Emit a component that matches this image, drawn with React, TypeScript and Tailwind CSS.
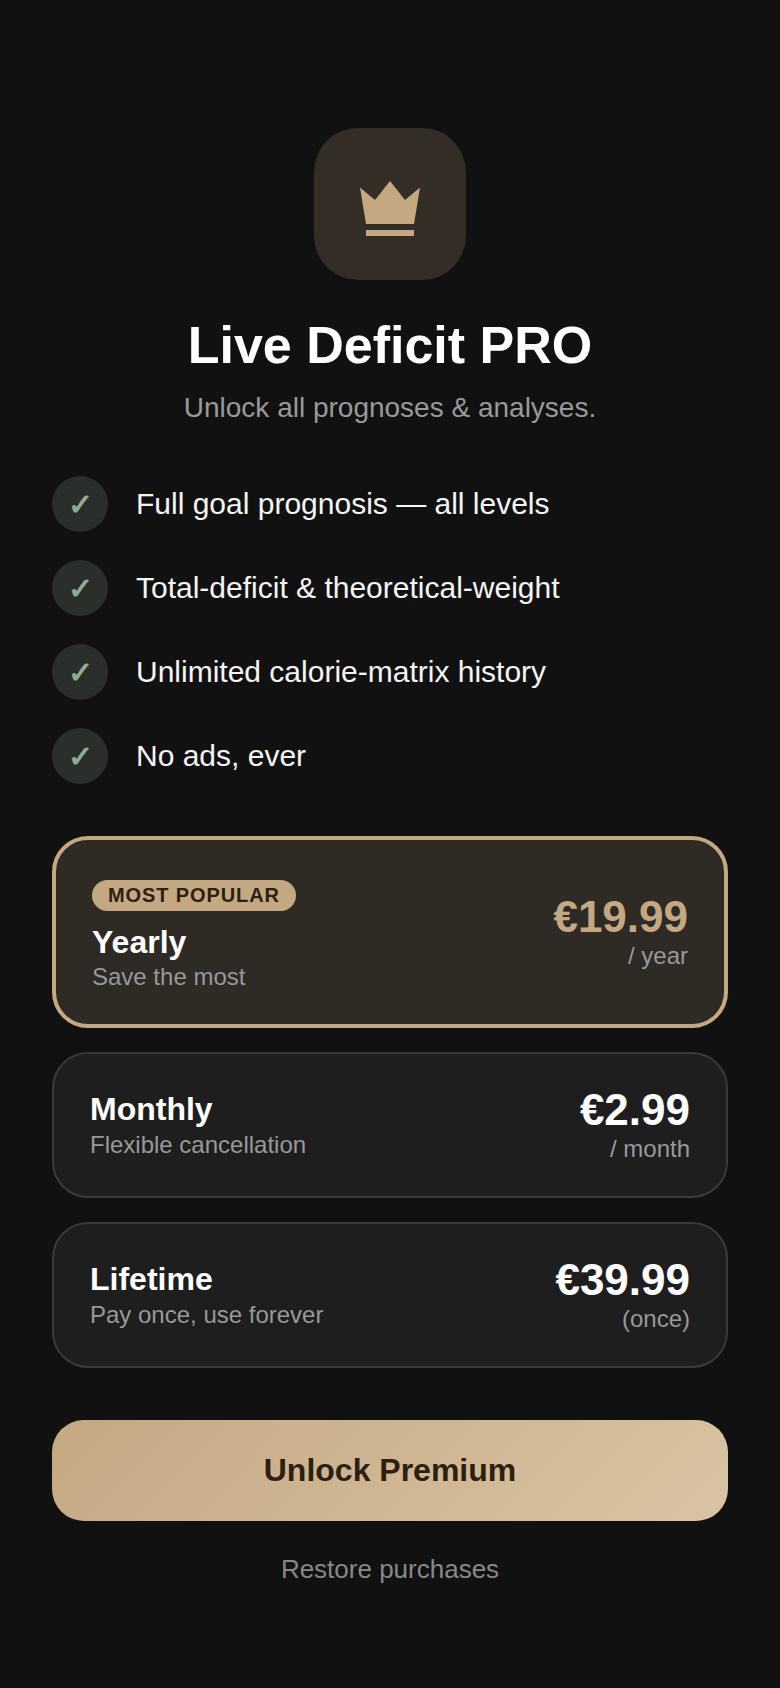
const features = [
  "Full goal prognosis — all levels",
  "Total-deficit & theoretical-weight",
  "Unlimited calorie-matrix history",
  "No ads, ever",
];

const plans = [
  { name: "Monthly", desc: "Flexible cancellation", price: "€2.99", unit: "/ month" },
  { name: "Lifetime", desc: "Pay once, use forever", price: "€39.99", unit: "(once)" },
];

function Crown() {
  return (
    <svg width="60" height="55" viewBox="0 0 60 55" fill="#c4a882">
      <path d="M0 6.5 15 19 30 0 45 19 60 6.5 54 43H6Z" />
      <rect x="6" y="49" width="48" height="6" />
    </svg>
  );
}

export default function App() {
  return (
    <div className="min-h-[1688px] bg-[#111111] px-[52px] pt-[128px] font-['Liberation_Sans',sans-serif] text-white">
      <div className="flex flex-col items-center">
        <div className="flex h-[152px] w-[152px] items-center justify-center rounded-[44px] bg-[#332d26] pt-[9px]">
          <Crown />
        </div>
        <h1 className="mt-[33px] text-[52px] font-bold leading-[64px]">Live Deficit PRO</h1>
        <p className="mt-[11px] text-[28px] leading-[40px] text-[#999999]">Unlock all prognoses &amp; analyses.</p>
      </div>

      <ul className="mt-[48px] flex flex-col gap-[28px]">
        {features.map((f) => (
          <li key={f} className="flex items-center gap-[28px]">
            <span className="flex h-[56px] w-[56px] items-center justify-center rounded-full bg-[#2a2f2b] text-[30px] font-bold text-[#8fae8f]">
              ✓
            </span>
            <span className="text-[30px] leading-[44px] text-[#f5f5f5]">{f}</span>
          </li>
        ))}
      </ul>

      <div className="mt-[52px] flex flex-col gap-[24px]">
        <div className="flex h-[192px] items-center justify-between rounded-[36px] border-4 border-[#c4a882] bg-[#2e2a24] px-[36px]">
          <div className="pt-[6px]">
            <span className="inline-block rounded-[16px] bg-[#c4a882] px-[16px] text-[20px] font-bold leading-[31px] tracking-[0.9px] text-[#2c2010]">
              MOST POPULAR
            </span>
            <div className="mt-[12px] text-[32px] font-bold leading-[38px]">Yearly</div>
            <div className="mt-[2px] text-[24px] leading-[28px] text-[#999999]">Save the most</div>
          </div>
          <div className="pb-[2px] text-right">
            <div className="text-[44px] font-bold leading-[50px] text-[#c4a882]">€19.99</div>
            <div className="text-[24px] leading-[28px] text-[#999999]">/ year</div>
          </div>
        </div>

        {plans.map((p) => (
          <div
            key={p.name}
            className="flex h-[146px] items-center justify-between rounded-[36px] border-2 border-[#3a3a3a] bg-[#1e1e1e] px-[36px] pb-[2px]"
          >
            <div>
              <div className="text-[32px] font-bold leading-[38px]">{p.name}</div>
              <div className="mt-[3px] text-[24px] leading-[28px] text-[#999999]">{p.desc}</div>
            </div>
            <div className="text-right">
              <div className="text-[44px] font-bold leading-[50px]">{p.price}</div>
              <div className="text-[24px] leading-[28px] text-[#999999]">{p.unit}</div>
            </div>
          </div>
        ))}
      </div>

      <button className="mt-[52px] flex h-[101px] w-full items-center justify-center rounded-[32px] bg-[linear-gradient(135deg,#c4a882,#d9c4a3)] pb-[2px] text-[32px] font-bold text-[#2c2010]">
        Unlock Premium
      </button>
      <div className="mt-[28px] text-center text-[26px] leading-[40px] text-[#888888]">Restore purchases</div>
    </div>
  );
}
